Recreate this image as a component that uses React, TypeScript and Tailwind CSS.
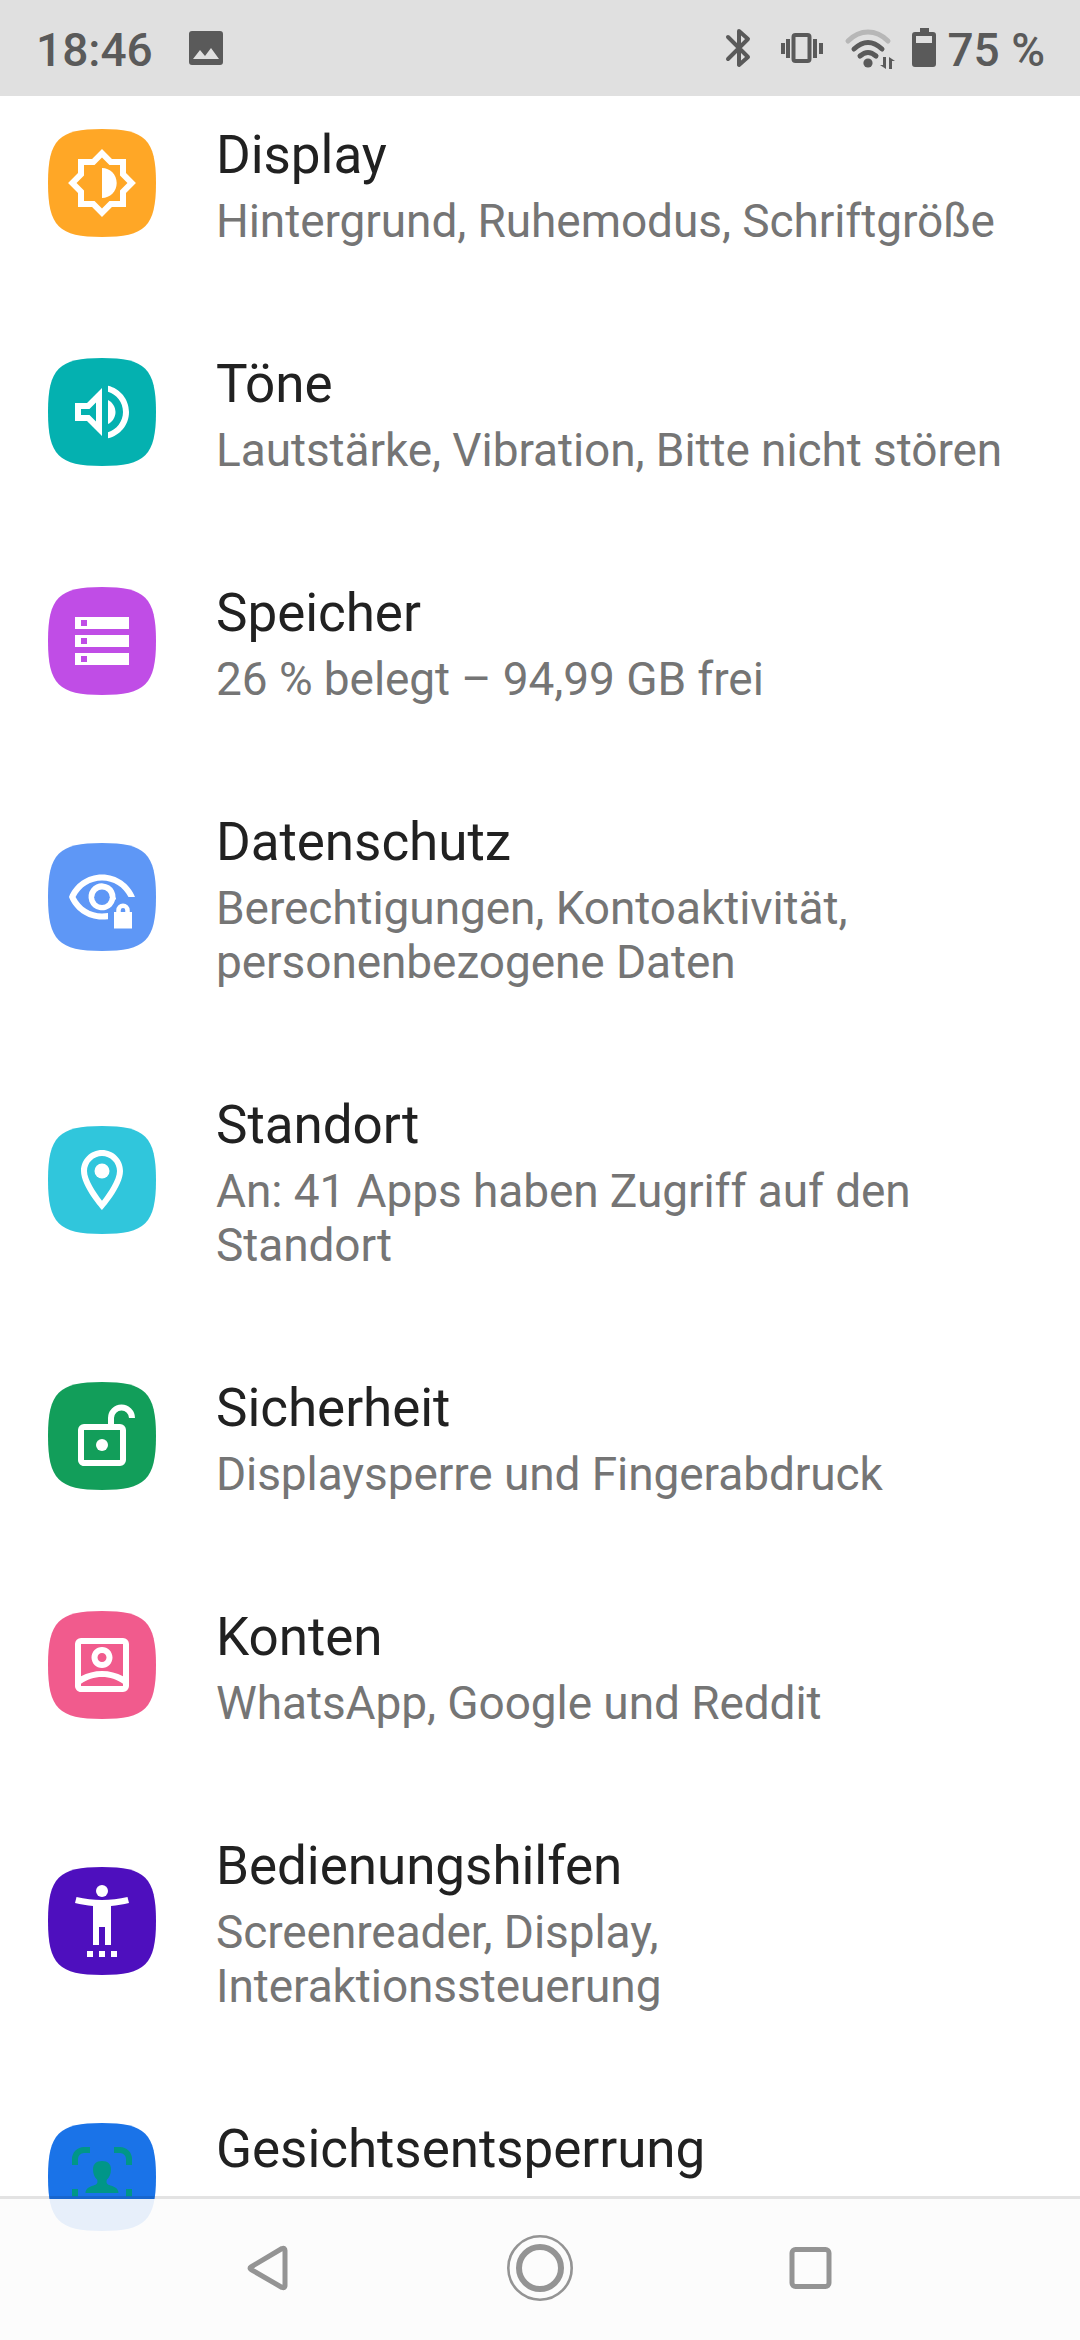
import type { ReactNode } from "react";

const SQUIRCLE =
  "M54 0C10.8 0 0 10.8 0 54C0 97.2 10.8 108 54 108C97.2 108 108 97.2 108 54C108 10.8 97.2 0 54 0Z";

type Item = {
  title: string;
  summary: string;
  color: string;
  icon: ReactNode;
};

const items: Item[] = [
  {
    title: "Display",
    summary: "Hintergrund, Ruhemodus, Schriftgröße",
    color: "text-[#ffa726]",
    icon: (
      <path d="M12 17c2.7 0 4.9-2.2 4.9-5S14.700 7 12 7zM20 8.69V4h-4.69L12 .69 8.69 4H4v4.690L.69 12 4 15.31V20h4.690L12 23.310 15.310 20H20v-4.690L23.310 12 20 8.690zm-2 5.790V18h-3.520L12 20.480 9.520 18H6v-3.520L3.520 12 6 9.520V6h3.520L12 3.520 14.480 6H18v3.520L20.480 12 18 14.480z" />
    ),
  },
  {
    title: "Töne",
    summary: "Lautstärke, Vibration, Bitte nicht stören",
    color: "text-[#04b1b0]",
    icon: (
      <path
        fillRule="evenodd"
        d="M3 9v6h4l5 5V4L7 9zm7-.17v6.34L7.83 13H5v-2h2.83zM14 7.97v8.05c1.48-.73 2.5-2.25 2.5-4.02S15.48 8.71 14 7.97zM14 3.23v2.06c2.89.86 5 3.54 5 6.71s-2.11 5.85-5 6.71v2.06c4.01-.91 7-4.49 7-8.77s-2.99-7.86-7-8.77z"
      />
    ),
  },
  {
    title: "Speicher",
    summary: "26 % belegt – 94,99 GB frei",
    color: "text-[#c04de6]",
    icon: (
      <path
        fillRule="evenodd"
        d="M3 20h18v-4H3zm2-3h2v2H5zM3 4v4h18V4zm4 3H5V5h2zM3 14h18v-4H3zm2-3h2v2H5z"
      />
    ),
  },
  {
    title: "Datenschutz",
    summary: "Berechtigungen, Kontoaktivität, personenbezogene Daten",
    color: "text-[#5e97f6]",
    icon: (
      <>
        <path d="M14 17.34v2.08c-.65.08-1.32.08-2 .08C7 19.5 2.73 16.39 1 12c1.73-4.39 6-7.5 11-7.5s9.27 3.11 11 7.5h-2.17C19.17 8.63 15.79 6.5 12 6.5S4.83 8.63 3.18 12c1.65 3.37 5.03 5.5 8.82 5.5.68 0 1.35-.05 2-.16z" />
        <path d="M16.35 13.1A4.5 4.5 0 1 1 16.5 12l.2.6-1.1 1.5z" />
        <circle cx="12" cy="12.1" r="2.6" fill="currentColor" />
        <path
          fillRule="evenodd"
          d="M16 17h.75v-.6a2.25 2.25 0 0 1 4.5 0v.6H22v5.5h-6zm2.25 0h1.5v-.6a.75.75 0 0 0-1.5 0z"
        />
      </>
    ),
  },
  {
    title: "Standort",
    summary: "An: 41 Apps haben Zugriff auf den Standort",
    color: "text-[#30c6dc]",
    icon: (
      <>
        <path
          fillRule="evenodd"
          d="M12 2C8.13 2 5 5.13 5 9c0 5.25 7 13 7 13s7-7.75 7-13c0-3.87-3.13-7-7-7zM7 9c0-2.76 2.24-5 5-5s5 2.24 5 5c0 2.88-2.88 7.19-5 9.88C9.92 16.21 7 11.85 7 9z"
        />
        <circle cx="12" cy="9" r="2.5" />
      </>
    ),
  },
  {
    title: "Sicherheit",
    summary: "Displaysperre und Fingerabdruck",
    color: "text-[#129e5a]",
    icon: (
      <>
        <path
          fillRule="evenodd"
          d="M18 8h-2V6a2.5 2.5 0 0 1 5 0h2a4.5 4.5 0 0 0-9 0v2H6a2 2 0 0 0-2 2v10c0 1.1.9 2 2 2h12a2 2 0 0 0 2-2V10a2 2 0 0 0-2-2zm0 12H6V10h12z"
        />
        <circle cx="12" cy="15" r="2" />
      </>
    ),
  },
  {
    title: "Konten",
    summary: "WhatsApp, Google und Reddit",
    color: "text-[#f15b8d]",
    icon: (
      <path
        fillRule="evenodd"
        d="M19 3H5a2 2 0 0 0-2 2v14c0 1.1.9 2 2 2h14a2 2 0 0 0 2-2V5a2 2 0 0 0-2-2zM5 19v-.77C6.97 16.86 9.39 16 12 16s5.03.86 7 2.23V19zm14-3.22C16.91 14.67 14.54 14 12 14s-4.91.67-7 1.78V5h14zM12 13c1.94 0 3.5-1.56 3.5-3.5S13.94 6 12 6 8.5 7.56 8.5 9.5 10.06 13 12 13zm0-5c.83 0 1.5.67 1.5 1.5S12.83 11 12 11s-1.5-.67-1.5-1.5S11.17 8 12 8z"
      />
    ),
  },
  {
    title: "Bedienungshilfen",
    summary: "Screenreader, Display, Interaktionssteuerung",
    color: "text-[#4e0fbe]",
    icon: (
      <>
        <circle cx="12" cy="2" r="2" />
        <path d="M20.5 4C17.7 4.7 14.83 5 12 5s-5.700-.3-8.500-1L3 6c1.860.5 4 .83 6 1v13h2v-6h2v6h2V7c2-.17 4.140-.5 6-1zM7 22h2v2H7zM11 22h2v2h-2zM15 22h2v2h-2z" />
      </>
    ),
  },
  {
    title: "Gesichtsentsperrung",
    summary: "",
    color: "text-[#1a73e8]",
    icon: (
      <g className="text-[#009688]">
        <path
          d="M3 8V6a3 3 0 0 1 3-3h2M16 3h2a3 3 0 0 1 3 3v2M3 16v2.4M21 16v2.4"
          fill="none"
          stroke="currentColor"
          strokeWidth="2"
        />
        <path
          d="M12 6.7c-2 0-3 1.1-3 2.7 0 1.5.5 2.7 1.4 3.5.3 1.2-.2 1.6-1.2 1.9-1.700.5-2.700 1.200-2.700 2.500h11c0-1.300-1-2-2.700-2.500-1-.3-1.500-.7-1.200-1.900.9-.8 1.400-2 1.400-3.500 0-1.600-1-2.700-3-2.700z"
          fill="currentColor"
        />
      </g>
    ),
  },
];

const StatusBar = () => (
  <header className="relative z-10 flex h-24 shrink-0 items-center justify-between bg-[#e0e0e0] pr-[35px] pl-[36px] text-[46px] font-medium text-[#5a5a5a]">
    <div className="flex items-center">
      <span className="pt-1 leading-none">18:46</span>
      <svg className="ml-[35px] size-[36px]" viewBox="0 0 36 36" fill="currentColor">
        <path
          fillRule="evenodd"
          d="M4 1h28q3 0 3 3v28q0 3-3 3H4q-3 0-3-3V4q0-3 3-3zm1 28h26l-8-11-6 8-5-6z"
        />
      </svg>
    </div>
    <div className="flex items-center">
      <svg
        className="h-[40px] w-[26px]"
        viewBox="0 0 26 40"
        fill="none"
        stroke="currentColor"
        strokeWidth="4"
        strokeLinejoin="round"
        strokeLinecap="round"
      >
        <path d="M3 9l20 20-9 8V3l9 8L3 31" />
      </svg>
      <svg className="ml-[29px] h-[32px] w-[44px]" viewBox="0 0 44 32" fill="currentColor">
        <rect x="13.5" y="3" width="16" height="26" rx="2" fill="none" stroke="currentColor" strokeWidth="4" />
        <path d="M1 11h4v11H1zM6 7h4v19H6zM33 7h4v19h-4zM39 11h4v11h-4z" />
      </svg>
      <svg
        className="ml-[20px] h-[42px] w-[52px]"
        viewBox="0 0 52 42"
        fill="none"
        stroke="currentColor"
        strokeWidth="5"
        strokeLinecap="round"
      >
        <path d="M4 14C16 2 32 2 44 14" className="stroke-[#b7b7b7]" />
        <path d="M10 22Q24 9 38 22M16 29Q24 22 32 29" />
        <circle cx="24" cy="36" r="4.6" fill="currentColor" stroke="none" />
        <path d="M39 30h3v12l-6-4h3zM45 42V30l6 4h-3v8z" fill="currentColor" stroke="none" />
      </svg>
      <svg className="ml-[16px] h-[40px] w-[24px]" viewBox="0 0 24 40" fill="currentColor">
        <path fillRule="evenodd" d="M8 0h9v4h4q3 0 3 3v29q0 3-3 3H3q-3 0-3-3V7q0-3 3-3h5zM4 8v7h16V8z" />
      </svg>
      <span className="ml-[11px] pt-1 leading-none">75 %</span>
    </div>
  </header>
);

const Row = ({ title, summary, color, icon }: Item) => (
  <li className="flex items-center pl-12">
    <svg className={`size-[108px] shrink-0 ${color}`} viewBox="0 0 108 108">
      <path d={SQUIRCLE} fill="currentColor" />
      <svg x="18" y="18" width="72" height="72" viewBox="0 0 24 24" fill="white" overflow="visible">
        {icon}
      </svg>
    </svg>
    <div className="ml-[60px] w-[820px] pt-[55.5px] pb-[50px]">
      <h2 className="text-[53px] leading-[62px] tracking-[-0.05px] text-[#212121]">{title}</h2>
      <p className="mt-[7.5px] min-h-[54px] text-[46px] leading-[54px] tracking-[-0.08px] text-[#757575]">
        {summary}
      </p>
    </div>
  </li>
);

const NavBar = () => (
  <nav className="absolute inset-x-0 bottom-0 flex h-36 items-center justify-between border-t-[3px] border-black/11 bg-[#fcfcfc]/91 bg-clip-padding px-[234px] pb-[3px] text-[#949494]">
    <svg className="size-[66px]" viewBox="0 0 66 66" fill="none" stroke="currentColor" strokeWidth="5" strokeLinejoin="round">
      <path d="M17 32L48 13.500q3-1 3 2v35q0 3-3 2L17 34.500q-2-1.300 0-2.500z" />
    </svg>
    <svg className="size-[66px]" viewBox="0 0 66 66" fill="none" stroke="currentColor">
      <circle cx="33" cy="33" r="31.7" strokeWidth="2.6" />
      <circle cx="33" cy="33" r="21" strokeWidth="6" />
    </svg>
    <svg className="size-[66px]" viewBox="0 0 66 66" fill="none" stroke="currentColor" strokeWidth="5">
      <rect x="12" y="14.5" width="37" height="37" rx="3.5" />
    </svg>
  </nav>
);

export default function App() {
  return (
    <div className="relative flex h-[2340px] w-[1080px] flex-col overflow-hidden bg-white font-[Roboto,sans-serif]">
      <StatusBar />
      <ul className="-mt-[27.5px]">
        {items.map((item) => (
          <Row key={item.title} {...item} />
        ))}
      </ul>
      <NavBar />
    </div>
  );
}
